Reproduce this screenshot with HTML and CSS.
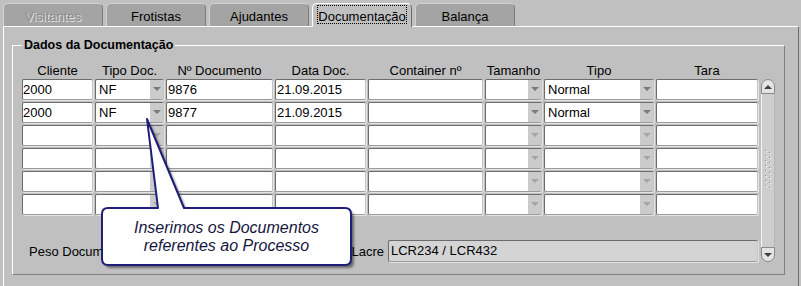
FILE: index.html
```html
<!DOCTYPE html>
<html lang="pt">
<head>
    <meta charset="UTF-8">
    <meta name="viewport" content="width=device-width, initial-scale=1.0">
    <title>Documentação</title>
    <link rel="stylesheet" href="styles.css">
</head>
<body>
    <div class="screen">
        <div class="tabs">
            <div class="tab disabled">Visitantes</div>
            <div class="tab">Frotistas</div>
            <div class="tab">Ajudantes</div>
            <div class="tab active"><span class="focus">Documentação</span></div>
            <div class="tab">Balança</div>
        </div>

        <div class="panel">
            <div class="group">
                <div class="legend">Dados da Documentação</div>

                <div class="grid">
                    <div class="head">Cliente</div>
                    <div class="head">Tipo Doc.</div>
                    <div class="head">Nº Documento</div>
                    <div class="head">Data Doc.</div>
                    <div class="head">Container nº</div>
                    <div class="head">Tamanho</div>
                    <div class="head">Tipo</div>
                    <div class="head">Tara</div>
                    <div class="head"></div>

                    <div class="scrollbar">
                        <div class="sb-up"></div>
                        <div class="sb-track">
                            <svg class="grip" width="8" height="42" viewBox="0 0 8 42">
                                <g fill="#8c8c8c">
                                    <rect x="1" y="0" width="1" height="1"/><rect x="5" y="2" width="1" height="1"/>
                                    <rect x="1" y="5" width="1" height="1"/><rect x="5" y="7" width="1" height="1"/>
                                    <rect x="1" y="10" width="1" height="1"/><rect x="5" y="12" width="1" height="1"/>
                                    <rect x="1" y="15" width="1" height="1"/><rect x="5" y="17" width="1" height="1"/>
                                    <rect x="1" y="20" width="1" height="1"/><rect x="5" y="22" width="1" height="1"/>
                                    <rect x="1" y="25" width="1" height="1"/><rect x="5" y="27" width="1" height="1"/>
                                    <rect x="1" y="30" width="1" height="1"/><rect x="5" y="32" width="1" height="1"/>
                                    <rect x="1" y="35" width="1" height="1"/><rect x="5" y="37" width="1" height="1"/>
                                </g>
                                <g fill="#ffffff">
                                    <rect x="2" y="1" width="1" height="1"/><rect x="6" y="3" width="1" height="1"/>
                                    <rect x="2" y="6" width="1" height="1"/><rect x="6" y="8" width="1" height="1"/>
                                    <rect x="2" y="11" width="1" height="1"/><rect x="6" y="13" width="1" height="1"/>
                                    <rect x="2" y="16" width="1" height="1"/><rect x="6" y="18" width="1" height="1"/>
                                    <rect x="2" y="21" width="1" height="1"/><rect x="6" y="23" width="1" height="1"/>
                                    <rect x="2" y="26" width="1" height="1"/><rect x="6" y="28" width="1" height="1"/>
                                    <rect x="2" y="31" width="1" height="1"/><rect x="6" y="33" width="1" height="1"/>
                                    <rect x="2" y="36" width="1" height="1"/><rect x="6" y="38" width="1" height="1"/>
                                </g>
                            </svg>
                        </div>
                        <div class="sb-down"></div>
                    </div>

                    <!-- linha 1 -->
                    <div class="field">2000</div>
                    <div class="field select"><span class="val">NF</span><span class="btn"></span></div>
                    <div class="field pad">9876</div>
                    <div class="field pad">21.09.2015</div>
                    <div class="field"></div>
                    <div class="field select"><span class="val"></span><span class="btn"></span></div>
                    <div class="field select"><span class="val">Normal</span><span class="btn"></span></div>
                    <div class="field"></div>

                    <!-- linha 2 -->
                    <div class="field">2000</div>
                    <div class="field select"><span class="val">NF</span><span class="btn"></span></div>
                    <div class="field pad">9877</div>
                    <div class="field pad">21.09.2015</div>
                    <div class="field"></div>
                    <div class="field select"><span class="val"></span><span class="btn"></span></div>
                    <div class="field select"><span class="val">Normal</span><span class="btn"></span></div>
                    <div class="field"></div>

                    <!-- linhas vazias -->
                    <div class="field"></div>
                    <div class="field select"><span class="val"></span><span class="btn off"></span></div>
                    <div class="field"></div>
                    <div class="field"></div>
                    <div class="field"></div>
                    <div class="field select"><span class="val"></span><span class="btn off"></span></div>
                    <div class="field select"><span class="val"></span><span class="btn off"></span></div>
                    <div class="field"></div>

                    <div class="field"></div>
                    <div class="field select"><span class="val"></span><span class="btn off"></span></div>
                    <div class="field"></div>
                    <div class="field"></div>
                    <div class="field"></div>
                    <div class="field select"><span class="val"></span><span class="btn off"></span></div>
                    <div class="field select"><span class="val"></span><span class="btn off"></span></div>
                    <div class="field"></div>

                    <div class="field"></div>
                    <div class="field select"><span class="val"></span><span class="btn off"></span></div>
                    <div class="field"></div>
                    <div class="field"></div>
                    <div class="field"></div>
                    <div class="field select"><span class="val"></span><span class="btn off"></span></div>
                    <div class="field select"><span class="val"></span><span class="btn off"></span></div>
                    <div class="field"></div>

                    <div class="field"></div>
                    <div class="field select"><span class="val"></span><span class="btn off"></span></div>
                    <div class="field"></div>
                    <div class="field"></div>
                    <div class="field"></div>
                    <div class="field select"><span class="val"></span><span class="btn off"></span></div>
                    <div class="field select"><span class="val"></span><span class="btn off"></span></div>
                    <div class="field"></div>

                    <div class="footer">
                        <span class="label">Peso Documentos</span>
                        <div class="field peso"></div>
                        <span class="spacer"></span>
                        <span class="label lacre-label">Lacre</span>
                        <div class="field readonly lacre">LCR234 / LCR432</div>
                    </div>
                </div>
            </div>
        </div>

        <!-- balão explicativo -->
        <div class="callout">
            <svg class="callout-shape" width="265" height="160" viewBox="95 112 265 160">
                <defs>
                    <filter id="soft" x="-10%" y="-10%" width="120%" height="120%">
                        <feGaussianBlur stdDeviation="1.3"/>
                    </filter>
                </defs>
                <path transform="translate(3 3)" filter="url(#soft)" fill="rgba(0,0,0,0.45)"
                      d="M108 208 L158 208 L147 119 L184 208 L345 208 Q351 208 351 214 L351 259 Q351 265 345 265 L108 265 Q102 265 102 259 L102 214 Q102 208 108 208 Z"/>
                <path fill="#ffffff" stroke="#1e1e78" stroke-width="2" stroke-linejoin="round"
                      d="M108 208 L158 208 L147 119 L184 208 L345 208 Q351 208 351 214 L351 259 Q351 265 345 265 L108 265 Q102 265 102 259 L102 214 Q102 208 108 208 Z"/>
            </svg>
            <div class="callout-text">Inserimos os Documentos<br>referentes ao Processo</div>
        </div>
    </div>
</body>
</html>
```

FILE: styles.css
```css
body {
    margin: 0;
    background-color: #c0c0c0;
    font-family: "Liberation Sans", Arial, sans-serif;
    font-size: 13px;
    color: #000;
}
.screen {
    position: relative;
    width: 801px;
    height: 286px;
    overflow: hidden;
}

/* abas */
.tabs {
    display: flex;
    align-items: flex-start;
    gap: 3px;
    height: 26px;
    padding: 3px 0 0 3px;
    box-sizing: border-box;
}
.tab {
    width: 100px;
    height: 23px;
    box-sizing: border-box;
    padding-top: 5px;
    line-height: 15px;
    text-align: center;
    background-color: #a4a4a4;
    border: 1px solid;
    border-bottom: 0;
    border-color: #d2d2d2 #7c7c7c #7c7c7c #d2d2d2;
    border-radius: 5px 5px 0 0;
    white-space: nowrap;
}
.tab.disabled {
    color: #8c8c8c;
    text-shadow: 1px 1px 0 #e6e6e6;
}
.tab.active {
    position: relative;
    z-index: 1;
    height: 24px;
    margin-bottom: -1px;
    padding-top: 1px;
    background-color: #c0c0c0;
    border-color: #fff #6e6e6e #6e6e6e #fff;
}
.focus {
    display: inline-block;
    padding: 4px 1px 0;
    outline: 1px dotted #000;
    outline-offset: -1px;
}

/* painel */
.panel {
    margin: 0 2px 0 3px;
    height: 260px;
    box-sizing: border-box;
    border-top: 1px solid #fff;
    border-left: 1px solid #fff;
    border-right: 1px solid #6e6e6e;
    padding: 18px 0 0 8px;
}
.group {
    width: 773px;
    box-sizing: border-box;
    border: 1px solid;
    border-color: #fff #808080 #808080 #fff;
    padding: 0 9px 12px 9px;
}
.legend {
    width: fit-content;
    margin-top: -9px;
    padding: 0 2px;
    background-color: #c0c0c0;
    font-weight: bold;
    font-size: 12.5px;
    line-height: 16px;
}

/* grade */
.grid {
    display: grid;
    grid-template-columns: 71px 69px 107px 91px 115px 57px 110px 102px 15px;
    grid-template-rows: 16px repeat(6, 21px) 45px;
    gap: 2px;
    margin-top: 8px;
}
.head {
    padding-top: 2px;
    line-height: 16px;
    text-align: center;
    white-space: nowrap;
}
.field {
    box-sizing: border-box;
    height: 21px;
    background-color: #fff;
    border: 1px solid;
    border-color: #6c6c6c #c4c4c4 #9c9c9c #6c6c6c;
    border-radius: 2px;
    box-shadow: 1px 1px 0 #e4e4e4;
    line-height: 19px;
    white-space: nowrap;
    overflow: hidden;
}
.field.pad {
    padding-left: 1px;
}
.field.select {
    display: flex;
}
.select .val {
    flex: 1;
    padding: 1px 0 0 3px;
    line-height: 18px;
}
.select .btn {
    width: 13px;
    background-color: #cbcbcb;
    display: flex;
    justify-content: center;
    padding-top: 7px;
    box-sizing: border-box;
}
.select .btn::after {
    content: "";
    width: 0;
    height: 0;
    border-left: 4px solid transparent;
    border-right: 4px solid transparent;
    border-top: 4px solid #7a7a7a;
}
.select .btn.off::after {
    border-top-color: #a6a6a6;
}

/* barra de rolagem */
.scrollbar {
    grid-column: 9;
    grid-row: 2 / 9;
    margin-left: 1px;
    display: flex;
    flex-direction: column;
}
.sb-up,
.sb-down {
    height: 15px;
    box-sizing: border-box;
    border: 1px solid #8a8a8a;
    background-color: #e4e4e4;
    display: flex;
    justify-content: center;
    align-items: center;
}
.sb-up {
    border-radius: 7px 7px 0 0;
}
.sb-down {
    border-radius: 0 0 7px 7px;
}
.sb-up::after,
.sb-down::after {
    content: "";
    width: 0;
    height: 0;
    border-left: 4px solid transparent;
    border-right: 4px solid transparent;
}
.sb-up::after {
    border-bottom: 4px solid #404040;
}
.sb-down::after {
    border-top: 4px solid #404040;
}
.sb-track {
    flex: 1;
    background-color: #cecece;
    border-left: 1px solid #f6f6f6;
    border-right: 1px solid #b8b8b8;
    display: flex;
    justify-content: center;
    align-items: center;
}

/* rodapé */
.footer {
    grid-column: 1 / 9;
    align-self: end;
    display: flex;
    align-items: center;
    height: 22px;
    padding-left: 7px;
}
.label {
    white-space: nowrap;
}
.field.peso {
    width: 150px;
    margin-left: 6px;
}
.spacer {
    flex: 1;
}
.lacre-label {
    margin-right: 4px;
}
.field.lacre {
    width: 370px;
    height: 22px;
    line-height: 20px;
    padding-left: 2px;
}
.field.readonly {
    background-color: #d4d4d4;
}

/* balão */
.callout {
    position: absolute;
    left: 95px;
    top: 112px;
    width: 265px;
    height: 160px;
}
.callout-shape {
    display: block;
}
.callout-text {
    position: absolute;
    left: 7px;
    top: 96px;
    width: 249px;
    height: 57px;
    display: flex;
    align-items: center;
    justify-content: center;
    text-align: center;
    font-style: italic;
    font-size: 16px;
    line-height: 18px;
    color: #16163e;
}
```
